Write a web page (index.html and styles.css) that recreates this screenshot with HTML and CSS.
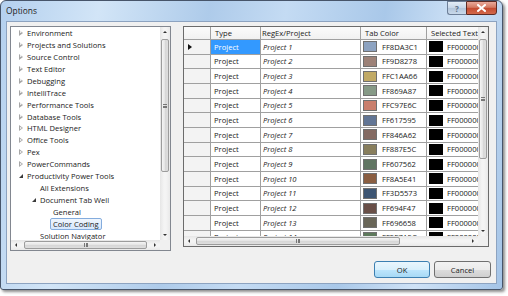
FILE: index.html
```html
<!DOCTYPE html>
<html>
<head>
<meta charset="utf-8">
<link rel="stylesheet" href="styles.css">
</head>
<body>
<div class="win">
  <div class="titlebar">
    <span class="title">Options</span>
    <div class="capbtns">
      <span class="cb help">?</span>
      <span class="cb close"><svg width="9" height="8" viewBox="0 0 9 8"><path d="M1 1 L8 7 M8 1 L1 7" stroke="#fff" stroke-width="2" stroke-linecap="square"/></svg></span>
    </div>
  </div>
  <div class="client">
    <div class="main">
      <div class="tree">
        <div class="tlist">
          <div class="ti"><span class="exp closed"></span><span class="lbl">Environment</span></div>
          <div class="ti"><span class="exp closed"></span><span class="lbl">Projects and Solutions</span></div>
          <div class="ti"><span class="exp closed"></span><span class="lbl">Source Control</span></div>
          <div class="ti"><span class="exp closed"></span><span class="lbl">Text Editor</span></div>
          <div class="ti"><span class="exp closed"></span><span class="lbl">Debugging</span></div>
          <div class="ti"><span class="exp closed"></span><span class="lbl">IntelliTrace</span></div>
          <div class="ti"><span class="exp closed"></span><span class="lbl">Performance Tools</span></div>
          <div class="ti"><span class="exp closed"></span><span class="lbl">Database Tools</span></div>
          <div class="ti"><span class="exp closed"></span><span class="lbl">HTML Designer</span></div>
          <div class="ti"><span class="exp closed"></span><span class="lbl">Office Tools</span></div>
          <div class="ti"><span class="exp closed"></span><span class="lbl">Pex</span></div>
          <div class="ti"><span class="exp closed"></span><span class="lbl">PowerCommands</span></div>
          <div class="ti"><span class="exp open"></span><span class="lbl">Productivity Power Tools</span></div>
          <div class="ti l2"><span class="exp"></span><span class="lbl">All Extensions</span></div>
          <div class="ti l2"><span class="exp open"></span><span class="lbl">Document Tab Well</span></div>
          <div class="ti l3"><span class="exp"></span><span class="lbl">General</span></div>
          <div class="ti l3"><span class="exp"></span><span class="lbl sel">Color Coding</span></div>
          <div class="ti l2"><span class="exp"></span><span class="lbl">Solution Navigator</span></div>
        </div>
        <div class="vscroll">
          <span class="arr up"></span>
          <div class="vtrack"><div class="vthumb t1"><span class="grip"></span></div></div>
          <span class="arr down"></span>
        </div>
        <div class="hscroll">
          <span class="arr left"></span>
          <div class="htrack"><div class="hthumb t1"><span class="grip"></span></div></div>
          <span class="arr right"></span>
        </div>
        <div class="corner"></div>
      </div>

      <div class="grid">
        <div class="gbody">
          <div class="gr ghead">
            <div class="c rh"></div>
            <div class="c ty">Type</div>
            <div class="c rx">RegEx/Project</div>
            <div class="c tc">Tab Color</div>
            <div class="c st">Selected Text</div>
          </div>
          <div id="rows"></div>
        </div>
        <div class="vscroll">
          <span class="arr up"></span>
          <div class="vtrack"><div class="vthumb t2"><span class="grip"></span></div></div>
          <span class="arr down"></span>
        </div>
        <div class="hscroll">
          <span class="arr left"></span>
          <div class="htrack"><div class="hthumb t2"><span class="grip"></span></div></div>
          <span class="arr right"></span>
        </div>
        <div class="corner"></div>
      </div>
    </div>
    <div class="sep"></div>
    <div class="footer">
      <button class="btn def">OK</button>
      <button class="btn">Cancel</button>
    </div>
  </div>
</div>
<script>
var cols = ["8DA3C1","9D8278","C1AA66","869A87","C97E6C","617595","846A62","887E5C","607562","8A5E41","3D5573","694F47","696658","5E7A5C"];
var h = "";
for (var i = 0; i < cols.length; i++) {
  h += '<div class="gr">' +
    '<div class="c rh">' + (i === 0 ? '<span class="ptr"></span>' : '') + '</div>' +
    '<div class="c ty' + (i === 0 ? ' cur' : '') + '">Project</div>' +
    '<div class="c rx"><i>Project ' + (i + 1) + '</i></div>' +
    '<div class="c tc"><span class="sw" style="background:#' + cols[i] + '"></span>FF' + cols[i] + '</div>' +
    '<div class="c st"><span class="sw blk"></span>FF000000</div>' +
    '</div>';
}
document.getElementById("rows").innerHTML = h;
</script>
</body>
</html>
```

FILE: styles.css
```css
* { box-sizing: border-box; }
html, body { margin: 0; padding: 0; background: #fff; }
body {
  font-family: "Open Sans", "Noto Sans", sans-serif;
  font-size: 7.6px;
  color: #1a1a1a;
  width: 508px;
  height: 296px;
  overflow: hidden;
}
.win {
  width: 503px;
  height: 290px;
  border: 1px solid #47556a;
  border-radius: 6px 6px 3px 3px;
  background: linear-gradient(100deg, #b4d0ee 0%, #d2e5f7 18%, #aecbea 38%, #c4dbf3 52%, #a9c8e9 70%, #cfe2f6 84%, #a4c4e7 100%);
  padding: 0 5px 5px 5px;
  box-shadow: 2px 2px 3px rgba(0,0,0,0.45);
  display: flex;
  flex-direction: column;
}
.titlebar {
  height: 20px;
  display: flex;
  align-items: flex-start;
  justify-content: space-between;
}
.title {
  font-size: 8.4px;
  color: #222;
  margin-top: 4px;
  margin-left: 0;
}
.capbtns { display: flex; margin-right: 0; }
.cb {
  height: 14px;
  display: flex;
  align-items: center;
  justify-content: center;
  border: 1px solid #6d7f98;
}
.help {
  width: 19px;
  border-right: none;
  border-radius: 0 0 0 3px;
  background: linear-gradient(#e4edf6, #c6d6e8 50%, #b3c6dc 51%, #c9d9ea);
  color: #5b6f86;
  font-size: 8px;
  font-weight: bold;
}
.close {
  width: 31px;
  border-color: #5e2b24;
  border-radius: 0 0 3px 0;
  background: linear-gradient(#e9a99a, #d47a62 45%, #c34a30 50%, #d2684a);
}
.close svg { display: block; }
.client {
  flex: 1;
  background: #f0f0f0;
  border: 1px solid #8da3c0;
  padding: 4px 0 0 3px;
  display: flex;
  flex-direction: column;
}
.main {
  display: flex;
  align-items: flex-start;
  gap: 12px;
}
/* tree */
.tree {
  width: 161px;
  height: 225px;
  border: 1px solid #828790;
  background: #fff;
  display: grid;
  grid-template-columns: 1fr 10px;
  grid-template-rows: 1fr 10px;
  overflow: hidden;
}
.tlist { overflow: hidden; }
.ti {
  height: 11.94px;
  display: flex;
  align-items: center;
  padding-left: 7px;
  white-space: nowrap;
}
.ti.l2 { padding-left: 20px; }
.ti.l3 { padding-left: 33px; }
.exp { width: 9px; height: 6px; flex: none; position: relative; }
.exp.closed::before {
  content: "";
  position: absolute;
  left: 1px; top: 0;
  border-left: 4px solid #a6a6a6;
  border-top: 3px solid transparent;
  border-bottom: 3px solid transparent;
}
.exp.closed::after {
  content: "";
  position: absolute;
  left: 2px; top: 1.5px;
  border-left: 2px solid #fff;
  border-top: 1.5px solid transparent;
  border-bottom: 1.5px solid transparent;
}
.exp.open::before {
  content: "";
  position: absolute;
  left: 1px; top: 1px;
  border-right: 4px solid #3b3b3b;
  border-top: 4px solid transparent;
}
.lbl { color: #1a1a1a; }
.lbl.sel {
  margin-left: -3px;
  padding: 0 2px;
  height: 12px;
  line-height: 10px;
  border: 1px solid #84acdd;
  border-radius: 2px;
  background: linear-gradient(#f0f6fd, #d5e7fc);
}
/* scrollbars */
.vscroll {
  display: flex;
  flex-direction: column;
  background: linear-gradient(to right, #e6e6e6, #f4f4f4 40%, #f4f4f4 60%, #e9e9e9);
}
.hscroll {
  display: flex;
  background: linear-gradient(#e6e6e6, #f4f4f4 40%, #f4f4f4 60%, #e9e9e9);
}
.corner { background: #f0f0f0; }
.arr { flex: none; position: relative; width: 10px; height: 10px; }
.arr::before { content: ""; position: absolute; }
.arr.up::before { left: 3px; top: 4px; border-bottom: 2px solid #333; border-left: 2px solid transparent; border-right: 2px solid transparent; }
.arr.down::before { left: 3px; top: 4px; border-top: 2px solid #333; border-left: 2px solid transparent; border-right: 2px solid transparent; }
.arr.left::before { left: 4px; top: 3px; border-right: 2px solid #333; border-top: 2px solid transparent; border-bottom: 2px solid transparent; }
.arr.right::before { left: 4px; top: 3px; border-left: 2px solid #333; border-top: 2px solid transparent; border-bottom: 2px solid transparent; }
.vtrack { flex: 1; padding: 1px 1px; }
.htrack { flex: 1; padding: 1px 1px; display: flex; }
.vthumb, .hthumb {
  border: 1px solid #9c9c9c;
  border-radius: 2px;
  display: flex;
  align-items: center;
  justify-content: center;
}
.vthumb { background: linear-gradient(to right, #f5f5f5, #e3e3e3 50%, #d6d6d6 51%, #dedede); }
.hthumb { background: linear-gradient(#f5f5f5, #e3e3e3 50%, #d6d6d6 51%, #dedede); height: 8px; }
.vthumb.t1 { margin-top: 1px; height: 133px; }
.hthumb.t1 { margin-left: 2px; width: 123px; }
.vthumb.t2 { margin-top: 1px; height: 120px; }
.hthumb.t2 { margin-left: 1px; width: 204px; }
.vthumb .grip { width: 4px; height: 4px; border-top: 1px solid #777; border-bottom: 1px solid #777; background: linear-gradient(transparent 1px, #777 1px, #777 2px, transparent 2px); }
.hthumb .grip { width: 4px; height: 4px; border-left: 1px solid #777; border-right: 1px solid #777; background: linear-gradient(to right, transparent 1px, #777 1px, #777 2px, transparent 2px); }
/* grid */
.grid {
  width: 306px;
  height: 221px;
  border: 1px solid #6b6b6b;
  background: #fff;
  display: grid;
  grid-template-columns: 1fr 10px;
  grid-template-rows: 1fr 10px;
  overflow: hidden;
}
.gbody { overflow: hidden; }
.gr {
  display: flex;
  height: 14.67px;
  border-bottom: 1px solid #a0a0a0;
  white-space: nowrap;
}
.gr.ghead { height: 13px; background: linear-gradient(#fbfbfb, #f1f1f1); }
.c {
  flex: none;
  border-right: 1px solid #a0a0a0;
  display: flex;
  align-items: center;
  overflow: hidden;
  padding-left: 3px;
}
.ghead .c { padding-left: 4px; }
.rh { width: 27px; background: #f3f3f3; position: relative; }
.ghead .rh { background: transparent; }
.ty { width: 50px; }
.rx { width: 100px; padding-left: 2px; }
.ghead .rx { padding-left: 1px; }
.tc { width: 66px; padding-left: 2px; }
.st { width: 80px; padding-left: 2px; }
.ty.cur { background: #3399ff; color: #fff; }
.ptr {
  position: absolute;
  left: 4px; top: 4px;
  border-left: 4px solid #111;
  border-top: 3px solid transparent;
  border-bottom: 3px solid transparent;
}
.sw {
  flex: none;
  width: 14px;
  height: 11px;
  border: 1px solid #707070;
  margin-right: 5px;
}
.sw.blk { background: #000; border-color: #000; margin-right: 4px; }
.sep { height: 0; }
.footer {
  display: flex;
  justify-content: flex-end;
  gap: 4px;
  margin-top: 10px;
  padding-right: 5px;
}
.btn {
  font-family: inherit;
  font-size: 7.6px;
  color: #1a1a1a;
  width: 57px;
  height: 17px;
  border: 1px solid #707070;
  border-radius: 3px;
  background: linear-gradient(#f2f2f2, #ebebeb 50%, #dddddd 51%, #cfcfcf);
  padding: 0;
}
.btn.def {
  border-color: #3c7fb1;
  background: linear-gradient(#eaf6fd, #d9f0fc 50%, #bee6fd 51%, #a7d9f5);
  width: 56px;
}
```
